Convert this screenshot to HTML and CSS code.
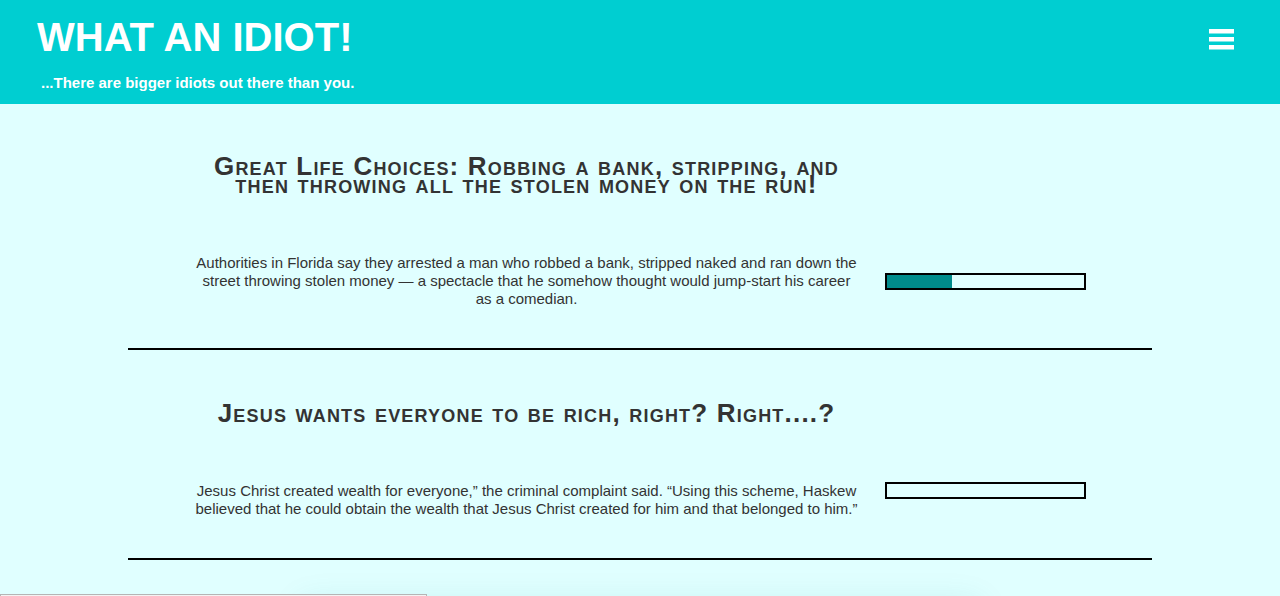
FILE: index.html
```html
<!DOCTYPE html>
<html lang="en">
<head>
<meta charset="utf-8">
<title>What an Idiot!</title>
<link rel="stylesheet" href="styles.css">
</head>
<body>
<header class="site-header">
  <div class="brand">
    <h1 class="brand-title">WHAT AN IDIOT!</h1>
    <p class="brand-tagline">...There are bigger idiots out there than you.</p>
  </div>
  <button class="menu-btn" aria-label="Menu">
    <svg width="26" height="22" viewBox="0 0 26 22"><rect x="0" y="0" width="25" height="4.5" fill="#fff"/><rect x="0" y="8" width="25" height="4.5" fill="#fff"/><rect x="0" y="16" width="25" height="4.5" fill="#fff"/></svg>
  </button>
</header>
<main class="feed">
  <article class="story story--first">
    <h2 class="story-title">Great Life Choices: Robbing a bank, stripping, and<br>then throwing all the stolen money on the run!</h2>
    <p class="story-text">Authorities in Florida say they arrested a man who robbed a bank, stripped naked and ran down the street throwing stolen money — a spectacle that he somehow thought would jump-start his career as a comedian.</p>
    <div class="meter meter--middle"><div class="meter-fill" style="width:33%"></div></div>
  </article>
  <hr class="divider">
  <article class="story story--second">
    <h2 class="story-title">Jesus wants everyone to be rich, right? Right....?</h2>
    <p class="story-text">Jesus Christ created wealth for everyone,” the criminal complaint said. “Using this scheme, Haskew believed that he could obtain the wealth that Jesus Christ created for him and that belonged to him.”</p>
    <div class="meter meter--top"><div class="meter-fill" style="width:0%"></div></div>
  </article>
  <hr class="divider">
  <div class="next-card"></div>
</main>
<div class="status-bar"></div>
</body>
</html>
```
FILE: styles.css
```css
* { box-sizing: border-box; }
html, body { margin: 0; padding: 0; }
body {
  background: #e0ffff;
  font-family: "Liberation Sans", Arial, Helvetica, sans-serif;
  color: #333;
  overflow: hidden;
}
.site-header {
  background: #00ced1;
  height: 104px;
  display: flex;
  justify-content: space-between;
  align-items: flex-start;
  padding: 0 20px 0 37px;
}
.brand-title {
  margin: 14px 0 0 0;
  font-size: 40px;
  line-height: 46px;
  font-weight: bold;
  color: #fff;
  letter-spacing: 0;
}
.brand-tagline {
  margin: 14px 0 0 4px;
  font-size: 15px;
  font-weight: bold;
  color: #fff;
  letter-spacing: 0;
}
.menu-btn {
  background: none;
  border: 0;
  padding: 0;
  margin: 29px 25px 0 0;
  line-height: 0;
}
.feed {
  width: 1024px;
  margin: 0 auto;
}
.story {
  display: grid;
  grid-template-columns: 664px 201px;
  column-gap: 26px;
  justify-content: center;
  padding-bottom: 40px;
}
.story--first { padding-top: 53px; row-gap: 61px; }
.story--second { padding-top: 54px; row-gap: 60px; }
.story-title {
  grid-column: 1;
  margin: 0;
  text-align: center;
  font-variant: small-caps;
  font-size: 26px;
  line-height: 18px;
  font-weight: bold;
  color: #333;
  letter-spacing: 1.2px;
}
.story-text {
  grid-column: 1;
  grid-row: 2;
  margin: 0;
  font-size: 15px;
  line-height: 18px;
  text-align: center;
  color: #333;
}
.meter {
  grid-column: 2;
  grid-row: 2;
  height: 17px;
  border: 2px solid #000;
  background: #e0ffff;
}
.meter--middle { align-self: center; }
.meter--top { align-self: start; }
.meter-fill {
  height: 100%;
  background: #008b8b;
}
.divider {
  margin: 0;
  border: 0;
  height: 2px;
  background: #000;
}
.next-card {
  width: 680px;
  height: 200px;
  margin: 42px auto 0;
  box-shadow: 0 0 30px rgba(0, 140, 140, 0.12);
}
.status-bar {
  position: fixed;
  left: 0;
  bottom: -18px;
  width: 427px;
  height: 20px;
  background: #f3f3f3;
  border: 1px solid #b5b5b5;
}
```
